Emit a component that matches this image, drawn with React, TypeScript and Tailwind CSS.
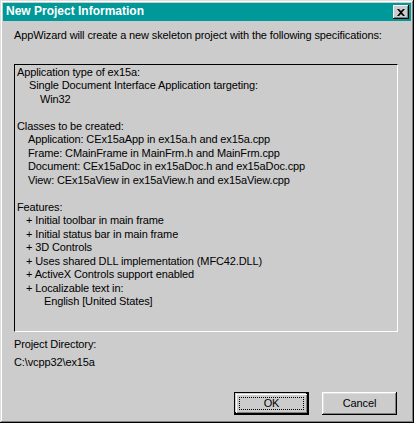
import React from 'react';

const features = [
  '+ Initial toolbar in main frame',
  '+ Initial status bar in main frame',
  '+ 3D Controls',
  '+ Uses shared DLL implementation (MFC42.DLL)',
  '+ ActiveX Controls support enabled',
  '+ Localizable text in:',
];

export default function App() {
  return (
    <div
      className="w-[414px] h-[423px] bg-[#cccccc] p-[3px] flex flex-col text-[11px] leading-[13.5px] tracking-[-0.12px] text-black shadow-[inset_-1px_-1px_#000,inset_1px_1px_#dfdfdf,inset_-2px_-2px_#808080,inset_2px_2px_#fff]"
      style={{ fontFamily: '"Liberation Sans", Arial, sans-serif' }}
    >
      {/* title bar */}
      <div className="h-[18px] bg-[#009999] flex items-center justify-between pl-[3px] pr-[2px]">
        <span className="text-white font-bold text-[12px] tracking-normal">New Project Information</span>
        <button className="w-[16px] h-[14px] bg-[#cccccc] flex items-center justify-center shadow-[inset_-1px_-1px_#000,inset_1px_1px_#fff,inset_-2px_-2px_#808080]">
          <svg width="8" height="7" viewBox="0 0 8 7">
            <path d="M0 0h2l2 2l2-2h2l-3 3.5l3 3.5h-2l-2-2l-2 2h-2l3-3.5z" fill="#000" />
          </svg>
        </button>
      </div>

      <div className="flex-1 flex flex-col px-[11px]">
        <p className="mt-[8px]">AppWizard will create a new skeleton project with the following specifications:</p>

        <div className="mt-[21px] h-[268px] mr-[2px] border-t border-l border-black border-r border-b border-r-white border-b-white pl-[2px] pt-[1px]">
          <p>Application type of ex15a:</p>
          <p className="pl-[12px]">Single Document Interface Application targeting:</p>
          <p className="pl-[23px]">Win32</p>
          <p>&nbsp;</p>
          <p>Classes to be created:</p>
          <p className="pl-[11px]">Application: CEx15aApp in ex15a.h and ex15a.cpp</p>
          <p className="pl-[11px]">Frame: CMainFrame in MainFrm.h and MainFrm.cpp</p>
          <p className="pl-[11px]">Document: CEx15aDoc in ex15aDoc.h and ex15aDoc.cpp</p>
          <p className="pl-[11px]">View: CEx15aView in ex15aView.h and ex15aView.cpp</p>
          <p>&nbsp;</p>
          <p>Features:</p>
          {features.map((f) => (
            <p key={f} className="pl-[9px]">{f}</p>
          ))}
          <p className="pl-[27px]">English [United States]</p>
        </div>

        <p className="mt-[6px]">Project Directory:</p>
        <p className="mt-[5px]">C:\vcpp32\ex15a</p>

        <div className="mt-auto mb-[5px] flex justify-end gap-[13px] pr-[3px]">
          <button className="w-[75px] h-[23px] border border-black bg-[#cccccc] p-[1px] shadow-[inset_-2px_-2px_#000]">
            <div className="w-full h-full flex items-center justify-center shadow-[inset_1px_1px_#fff,inset_-1px_-1px_#808080] p-[3px]">
              <div className="w-full h-full flex items-center justify-center border border-dotted border-black">OK</div>
            </div>
          </button>
          <button className="w-[75px] h-[23px] bg-[#cccccc] flex items-center justify-center shadow-[inset_-1px_-1px_#000,inset_1px_1px_#fff,inset_-2px_-2px_#808080,inset_2px_2px_#dfdfdf]">
            Cancel
          </button>
        </div>
      </div>
    </div>
  );
}
